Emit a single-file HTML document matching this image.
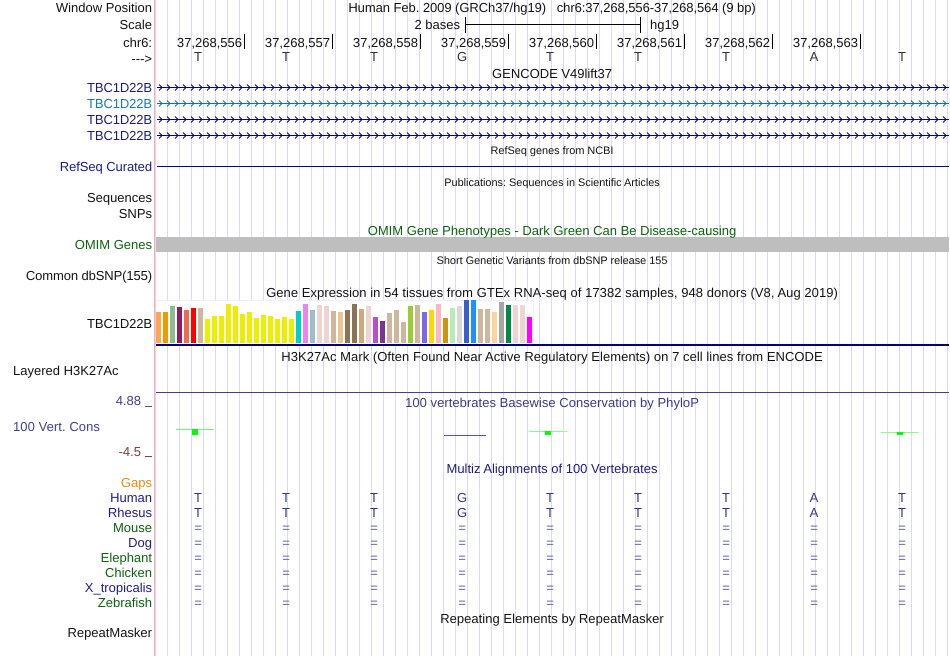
<!DOCTYPE html>
<html><head><meta charset="utf-8"><title>Genome Browser</title>
<style>
html,body{margin:0;padding:0;background:#fff}
#p{position:relative;width:950px;height:656px;overflow:hidden;font-family:"Liberation Sans",sans-serif;font-size:13px;color:#111;background:#fff;text-rendering:geometricPrecision}
#t{position:absolute;left:0;top:0;width:950px;height:656px}
#p span{position:absolute;white-space:nowrap;line-height:15px}
.r{right:798px;text-align:right}
.c{transform:translateX(-50%)}
.n{color:#1a1a86}.g{color:#0c640c}
#p .s{font-size:10.9px}
.a{color:#35358a}
.e{color:#6a6aa8}
svg{position:absolute;left:0;top:0}
</style></head><body><div id="p">
<svg width="950" height="656" shape-rendering="crispEdges">
<defs>
<pattern id="grid" x="167" y="0" width="12" height="656" patternUnits="userSpaceOnUse"><rect x="0" y="0" width="1" height="656" fill="#dadaf4"/></pattern>
<path id="ch" fill="none" shape-rendering="auto" d="M159 0.5l3 3l-3 3
m8-6l3 3l-3 3m8-6l3 3l-3 3m8-6l3 3l-3 3m8-6l3 3l-3 3m8-6l3 3l-3 3m8-6l3 3l-3 3m8-6l3 3l-3 3m8-6l3 3l-3 3m8-6l3 3l-3 3m8-6l3 3l-3 3
m8-6l3 3l-3 3m8-6l3 3l-3 3m8-6l3 3l-3 3m8-6l3 3l-3 3m8-6l3 3l-3 3m8-6l3 3l-3 3m8-6l3 3l-3 3m8-6l3 3l-3 3m8-6l3 3l-3 3m8-6l3 3l-3 3
m8-6l3 3l-3 3m8-6l3 3l-3 3m8-6l3 3l-3 3m8-6l3 3l-3 3m8-6l3 3l-3 3m8-6l3 3l-3 3m8-6l3 3l-3 3m8-6l3 3l-3 3m8-6l3 3l-3 3m8-6l3 3l-3 3
m8-6l3 3l-3 3m8-6l3 3l-3 3m8-6l3 3l-3 3m8-6l3 3l-3 3m8-6l3 3l-3 3m8-6l3 3l-3 3m8-6l3 3l-3 3m8-6l3 3l-3 3m8-6l3 3l-3 3m8-6l3 3l-3 3
m8-6l3 3l-3 3m8-6l3 3l-3 3m8-6l3 3l-3 3m8-6l3 3l-3 3m8-6l3 3l-3 3m8-6l3 3l-3 3m8-6l3 3l-3 3m8-6l3 3l-3 3m8-6l3 3l-3 3m8-6l3 3l-3 3
m8-6l3 3l-3 3m8-6l3 3l-3 3m8-6l3 3l-3 3m8-6l3 3l-3 3m8-6l3 3l-3 3m8-6l3 3l-3 3m8-6l3 3l-3 3m8-6l3 3l-3 3m8-6l3 3l-3 3m8-6l3 3l-3 3
m8-6l3 3l-3 3m8-6l3 3l-3 3m8-6l3 3l-3 3m8-6l3 3l-3 3m8-6l3 3l-3 3m8-6l3 3l-3 3m8-6l3 3l-3 3m8-6l3 3l-3 3m8-6l3 3l-3 3m8-6l3 3l-3 3
m8-6l3 3l-3 3m8-6l3 3l-3 3m8-6l3 3l-3 3m8-6l3 3l-3 3m8-6l3 3l-3 3m8-6l3 3l-3 3m8-6l3 3l-3 3m8-6l3 3l-3 3m8-6l3 3l-3 3m8-6l3 3l-3 3
m8-6l3 3l-3 3m8-6l3 3l-3 3m8-6l3 3l-3 3m8-6l3 3l-3 3m8-6l3 3l-3 3m8-6l3 3l-3 3m8-6l3 3l-3 3m8-6l3 3l-3 3m8-6l3 3l-3 3m8-6l3 3l-3 3
m8-6l3 3l-3 3m8-6l3 3l-3 3m8-6l3 3l-3 3m8-6l3 3l-3 3m8-6l3 3l-3 3m8-6l3 3l-3 3m8-6l3 3l-3 3m8-6l3 3l-3 3m8-6l3 3l-3 3"/>
</defs>
<rect x="155" width="795" height="656" fill="url(#grid)"/>
<rect x="154" width="1" height="656" fill="#ffaaaa"/>
<!-- scale -->
<rect x="465" y="24" width="176" height="1" fill="#000"/>
<rect x="465" y="17" width="1" height="16" fill="#000"/>
<rect x="640" y="17" width="1" height="16" fill="#000"/>
<!-- ticks -->
<g fill="#000"><rect x="244" y="34" width="1" height="15"/><rect x="332" y="34" width="1" height="15"/><rect x="420" y="34" width="1" height="15"/><rect x="508" y="34" width="1" height="15"/><rect x="596" y="34" width="1" height="15"/><rect x="684" y="34" width="1" height="15"/><rect x="772" y="34" width="1" height="15"/><rect x="860" y="34" width="1" height="15"/></g>
<!-- genes -->
<rect x="157" y="87" width="792" height="1" fill="#000080"/>
<rect x="157" y="103" width="792" height="1" fill="#0f6fa8"/>
<rect x="157" y="119" width="792" height="1" fill="#000080"/>
<rect x="157" y="135" width="792" height="1" fill="#000080"/>
<use href="#ch" x="0" y="84" stroke="#000080"/>
<use href="#ch" x="0" y="100" stroke="#0f6fa8"/>
<use href="#ch" x="0" y="116" stroke="#000080"/>
<use href="#ch" x="0" y="132" stroke="#000080"/>
<rect x="157" y="166" width="792" height="1" fill="#000080"/>
<rect x="156" y="237" width="793" height="15" fill="#bebebe"/>
<!-- gtex box -->
<rect x="156" y="300" width="378" height="44" fill="#fff"/>
<rect x="156" y="300" width="378" height="1" fill="#eeeef8"/>
<rect x="533" y="300" width="1" height="44" fill="#eeeef8"/>
<rect x="156" y="344" width="793" height="2" fill="#000080"/>
<g>
<rect x="156" y="312" width="5" height="31" fill="#FFA54F"/>
<rect x="163" y="312" width="5" height="31" fill="#EE9A00"/>
<rect x="170" y="306" width="5" height="37" fill="#8FBC8F"/>
<rect x="177" y="307" width="5" height="36" fill="#8B1C62"/>
<rect x="184" y="310" width="5" height="33" fill="#EE6A50"/>
<rect x="191" y="308" width="5" height="35" fill="#FF0000"/>
<rect x="198" y="308" width="5" height="35" fill="#CDB79E"/>
<rect x="205" y="319" width="5" height="24" fill="#EEEE00"/>
<rect x="212" y="316" width="5" height="27" fill="#EEEE00"/>
<rect x="219" y="316" width="5" height="27" fill="#EEEE00"/>
<rect x="226" y="304" width="5" height="39" fill="#EEEE00"/>
<rect x="233" y="306" width="5" height="37" fill="#EEEE00"/>
<rect x="240" y="314" width="5" height="29" fill="#EEEE00"/>
<rect x="247" y="312" width="5" height="31" fill="#EEEE00"/>
<rect x="254" y="318" width="5" height="25" fill="#EEEE00"/>
<rect x="261" y="315" width="5" height="28" fill="#EEEE00"/>
<rect x="268" y="316" width="5" height="27" fill="#EEEE00"/>
<rect x="275" y="319" width="5" height="24" fill="#EEEE00"/>
<rect x="282" y="317" width="5" height="26" fill="#EEEE00"/>
<rect x="289" y="319" width="5" height="24" fill="#EEEE00"/>
<rect x="296" y="311" width="5" height="32" fill="#00CDCD"/>
<rect x="303" y="304" width="5" height="39" fill="#EE82EE"/>
<rect x="310" y="310" width="5" height="33" fill="#9AC0CD"/>
<rect x="317" y="305" width="5" height="38" fill="#EED5D2"/>
<rect x="324" y="306" width="5" height="37" fill="#EED5D2"/>
<rect x="331" y="311" width="5" height="32" fill="#CDB79E"/>
<rect x="338" y="312" width="5" height="31" fill="#EEC591"/>
<rect x="345" y="310" width="5" height="33" fill="#8B7355"/>
<rect x="352" y="304" width="5" height="39" fill="#8B7355"/>
<rect x="359" y="309" width="5" height="34" fill="#CDAA7D"/>
<rect x="366" y="306" width="5" height="37" fill="#EED5D2"/>
<rect x="373" y="317" width="5" height="26" fill="#B452CD"/>
<rect x="380" y="321" width="5" height="22" fill="#7D3594"/>
<rect x="387" y="313" width="5" height="30" fill="#CDB79E"/>
<rect x="394" y="310" width="5" height="33" fill="#CDB79E"/>
<rect x="401" y="322" width="5" height="21" fill="#CDB79E"/>
<rect x="408" y="306" width="5" height="37" fill="#9ACD32"/>
<rect x="415" y="305" width="5" height="38" fill="#CDB79E"/>
<rect x="422" y="312" width="5" height="31" fill="#7A67EE"/>
<rect x="429" y="310" width="5" height="33" fill="#FFD700"/>
<rect x="436" y="304" width="5" height="39" fill="#FFB6C1"/>
<rect x="443" y="318" width="5" height="25" fill="#CD950C"/>
<rect x="450" y="308" width="5" height="35" fill="#B4EEB4"/>
<rect x="457" y="306" width="5" height="37" fill="#D9D9D9"/>
<rect x="464" y="300" width="5" height="43" fill="#3A5FCD"/>
<rect x="471" y="300" width="5" height="43" fill="#1E90FF"/>
<rect x="478" y="309" width="5" height="34" fill="#CDB79E"/>
<rect x="485" y="309" width="5" height="34" fill="#CDB79E"/>
<rect x="492" y="312" width="5" height="31" fill="#FFD39B"/>
<rect x="499" y="302" width="5" height="41" fill="#A6A6A6"/>
<rect x="506" y="305" width="5" height="38" fill="#008B45"/>
<rect x="513" y="305" width="5" height="38" fill="#EED5D2"/>
<rect x="520" y="305" width="5" height="38" fill="#EED5D2"/>
<rect x="527" y="317" width="5" height="26" fill="#FF00FF"/>
</g>
<rect x="156" y="392" width="793" height="1" fill="#4a3a90"/>
<!-- axis ticks -->
<rect x="145" y="406" width="7" height="1" fill="#5050a0"/>
<rect x="145" y="456" width="7" height="1" fill="#8a3a3a"/>
<!-- conservation -->
<rect x="176" y="429" width="38" height="1" fill="#66ff66"/><rect x="192" y="429" width="6" height="6" fill="#00ff00"/>
<rect x="444" y="435" width="42" height="1" fill="#5050e0"/>
<rect x="529" y="431" width="38" height="1" fill="#88ff88"/><rect x="545" y="431" width="6" height="4" fill="#00ff00"/>
<rect x="881" y="432" width="38" height="1" fill="#88ff88"/><rect x="897" y="432" width="6" height="3" fill="#00ff00"/>
</svg>
<div id="t">
<span class="r" style="top:0">Window Position</span>
<span class="r" style="top:17px">Scale</span>
<span class="r" style="top:35px">chr6:</span>
<span class="r" style="top:51px">---&gt;</span>
<span class="c" style="left:552px;top:0;letter-spacing:-.06px">Human Feb. 2009 (GRCh37/hg19) &nbsp; chr6:37,268,556-37,268,564 (9 bp)</span>
<span style="right:490px;top:17px">2 bases</span>
<span style="left:650px;top:17px">hg19</span>
<span style="right:708px;top:35px">37,268,556</span>
<span style="right:620px;top:35px">37,268,557</span>
<span style="right:532px;top:35px">37,268,558</span>
<span style="right:444px;top:35px">37,268,559</span>
<span style="right:356px;top:35px">37,268,560</span>
<span style="right:268px;top:35px">37,268,561</span>
<span style="right:180px;top:35px">37,268,562</span>
<span style="right:92px;top:35px">37,268,563</span>
<span class="c" style="left:198px;top:49px;color:#333">T</span><span class="c" style="left:286px;top:49px;color:#333">T</span><span class="c" style="left:374px;top:49px;color:#333">T</span><span class="c" style="left:462px;top:49px;color:#333">G</span><span class="c" style="left:550px;top:49px;color:#333">T</span><span class="c" style="left:638px;top:49px;color:#333">T</span><span class="c" style="left:726px;top:49px;color:#333">T</span><span class="c" style="left:814px;top:49px;color:#333">A</span><span class="c" style="left:902px;top:49px;color:#333">T</span>
<span class="c" style="left:552px;top:66px">GENCODE V49lift37</span>
<span class="r n" style="top:80px;letter-spacing:-.1px">TBC1D22B</span>
<span class="r" style="top:96px;color:#1a7ab0;letter-spacing:-.1px">TBC1D22B</span>
<span class="r n" style="top:112px;letter-spacing:-.1px">TBC1D22B</span>
<span class="r n" style="top:128px;letter-spacing:-.1px">TBC1D22B</span>
<span class="c s" style="left:552px;top:144px">RefSeq genes from NCBI</span>
<span class="r n" style="top:159px;letter-spacing:-.07px">RefSeq Curated</span>
<span class="c s" style="left:552px;top:176px">Publications: Sequences in Scientific Articles</span>
<span class="r" style="top:190px">Sequences</span>
<span class="r" style="top:206px">SNPs</span>
<span class="c g" style="left:552px;top:223px">OMIM Gene Phenotypes - Dark Green Can Be Disease-causing</span>
<span class="r g" style="top:237px">OMIM Genes</span>
<span class="c s" style="left:552px;top:254px">Short Genetic Variants from dbSNP release 155</span>
<span class="r" style="top:268px;letter-spacing:-.1px">Common dbSNP(155)</span>
<span class="c" style="left:552px;top:285px;letter-spacing:.05px">Gene Expression in 54 tissues from GTEx RNA-seq of 17382 samples, 948 donors (V8, Aug 2019)</span>
<span class="r" style="top:316px;letter-spacing:-.1px">TBC1D22B</span>
<span class="c" style="left:552px;top:349px;letter-spacing:.045px">H3K27Ac Mark (Often Found Near Active Regulatory Elements) on 7 cell lines from ENCODE</span>
<span style="left:13px;top:363px">Layered H3K27Ac</span>
<span style="right:809px;top:393px;color:#40408f">4.88</span>
<span class="c" style="left:552px;top:395px;color:#3a3a8c;letter-spacing:.04px">100 vertebrates Basewise Conservation by PhyloP</span>
<span style="left:13px;top:419px;color:#40408f;letter-spacing:.07px">100 Vert. Cons</span>
<span style="right:809px;top:444px;color:#8a3a3a">-4.5</span>
<span class="c n" style="left:552px;top:461px">Multiz Alignments of 100 Vertebrates</span>
<span class="r" style="top:475px;color:#f08c10">Gaps</span>
<span class="r n" style="top:490px">Human</span>
<span class="r n" style="top:505px">Rhesus</span>
<span class="r g" style="top:520px">Mouse</span>
<span class="r n" style="top:535px">Dog</span>
<span class="r g" style="top:550px">Elephant</span>
<span class="r g" style="top:565px">Chicken</span>
<span class="r n" style="top:580px">X_tropicalis</span>
<span class="r g" style="top:595px">Zebrafish</span>
<span class="c a" style="left:198px;top:490px">T</span><span class="c a" style="left:286px;top:490px">T</span><span class="c a" style="left:374px;top:490px">T</span><span class="c a" style="left:462px;top:490px">G</span><span class="c a" style="left:550px;top:490px">T</span><span class="c a" style="left:638px;top:490px">T</span><span class="c a" style="left:726px;top:490px">T</span><span class="c a" style="left:814px;top:490px">A</span><span class="c a" style="left:902px;top:490px">T</span>
<span class="c a" style="left:198px;top:505px">T</span><span class="c a" style="left:286px;top:505px">T</span><span class="c a" style="left:374px;top:505px">T</span><span class="c a" style="left:462px;top:505px">G</span><span class="c a" style="left:550px;top:505px">T</span><span class="c a" style="left:638px;top:505px">T</span><span class="c a" style="left:726px;top:505px">T</span><span class="c a" style="left:814px;top:505px">A</span><span class="c a" style="left:902px;top:505px">T</span>
<span class="c e" style="left:198px;top:520px">=</span><span class="c e" style="left:286px;top:520px">=</span><span class="c e" style="left:374px;top:520px">=</span><span class="c e" style="left:462px;top:520px">=</span><span class="c e" style="left:550px;top:520px">=</span><span class="c e" style="left:638px;top:520px">=</span><span class="c e" style="left:726px;top:520px">=</span><span class="c e" style="left:814px;top:520px">=</span><span class="c e" style="left:902px;top:520px">=</span>
<span class="c e" style="left:198px;top:535px">=</span><span class="c e" style="left:286px;top:535px">=</span><span class="c e" style="left:374px;top:535px">=</span><span class="c e" style="left:462px;top:535px">=</span><span class="c e" style="left:550px;top:535px">=</span><span class="c e" style="left:638px;top:535px">=</span><span class="c e" style="left:726px;top:535px">=</span><span class="c e" style="left:814px;top:535px">=</span><span class="c e" style="left:902px;top:535px">=</span>
<span class="c e" style="left:198px;top:550px">=</span><span class="c e" style="left:286px;top:550px">=</span><span class="c e" style="left:374px;top:550px">=</span><span class="c e" style="left:462px;top:550px">=</span><span class="c e" style="left:550px;top:550px">=</span><span class="c e" style="left:638px;top:550px">=</span><span class="c e" style="left:726px;top:550px">=</span><span class="c e" style="left:814px;top:550px">=</span><span class="c e" style="left:902px;top:550px">=</span>
<span class="c e" style="left:198px;top:565px">=</span><span class="c e" style="left:286px;top:565px">=</span><span class="c e" style="left:374px;top:565px">=</span><span class="c e" style="left:462px;top:565px">=</span><span class="c e" style="left:550px;top:565px">=</span><span class="c e" style="left:638px;top:565px">=</span><span class="c e" style="left:726px;top:565px">=</span><span class="c e" style="left:814px;top:565px">=</span><span class="c e" style="left:902px;top:565px">=</span>
<span class="c e" style="left:198px;top:580px">=</span><span class="c e" style="left:286px;top:580px">=</span><span class="c e" style="left:374px;top:580px">=</span><span class="c e" style="left:462px;top:580px">=</span><span class="c e" style="left:550px;top:580px">=</span><span class="c e" style="left:638px;top:580px">=</span><span class="c e" style="left:726px;top:580px">=</span><span class="c e" style="left:814px;top:580px">=</span><span class="c e" style="left:902px;top:580px">=</span>
<span class="c e" style="left:198px;top:595px">=</span><span class="c e" style="left:286px;top:595px">=</span><span class="c e" style="left:374px;top:595px">=</span><span class="c e" style="left:462px;top:595px">=</span><span class="c e" style="left:550px;top:595px">=</span><span class="c e" style="left:638px;top:595px">=</span><span class="c e" style="left:726px;top:595px">=</span><span class="c e" style="left:814px;top:595px">=</span><span class="c e" style="left:902px;top:595px">=</span>
<span class="c" style="left:552px;top:611px;letter-spacing:.03px">Repeating Elements by RepeatMasker</span>
<span class="r" style="top:625px">RepeatMasker</span>
</div>
</div></body></html>
